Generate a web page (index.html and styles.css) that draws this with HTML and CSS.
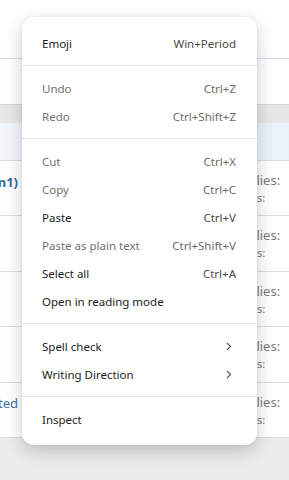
FILE: index.html
```html
<!DOCTYPE html>
<html>
<head>
<meta charset="utf-8">
<link rel="stylesheet" href="styles.css">
</head>
<body>
<div class="page">
  <div class="top"></div>
  <div class="gap"></div>
  <div class="bar"></div>
  <div class="head"></div>
  <div class="row r1">
    <div class="lead"><span class="topic bold">Question1)</span></div>
    <div class="stats"><div class="stats-in"><span class="st1">Replies:</span><span class="st2">Views:</span></div></div>
  </div>
  <div class="row r2">
    <div class="lead"></div>
    <div class="stats"><div class="stats-in"><span class="st1">Replies:</span><span class="st2">Views:</span></div></div>
  </div>
  <div class="row r3">
    <div class="lead"></div>
    <div class="stats"><div class="stats-in"><span class="st1">Replies:</span><span class="st2">Views:</span></div></div>
  </div>
  <div class="row r4">
    <div class="lead"></div>
    <div class="stats"><div class="stats-in"><span class="st1">Replies:</span><span class="st2">Views:</span></div></div>
  </div>
  <div class="row r5">
    <div class="lead"><span class="topic">Started</span></div>
    <div class="stats"><div class="stats-in"><span class="st1">Replies:</span><span class="st2">Views:</span></div></div>
  </div>
  <div class="foot"></div>
</div>

<div class="menu">
  <div class="item"><span>Emoji</span><span class="key">Win+Period</span></div>
  <div class="sep"></div>
  <div class="item off"><span>Undo</span><span class="key">Ctrl+Z</span></div>
  <div class="item off"><span>Redo</span><span class="key">Ctrl+Shift+Z</span></div>
  <div class="sep"></div>
  <div class="item off"><span>Cut</span><span class="key">Ctrl+X</span></div>
  <div class="item off"><span>Copy</span><span class="key">Ctrl+C</span></div>
  <div class="item"><span>Paste</span><span class="key">Ctrl+V</span></div>
  <div class="item off"><span>Paste as plain text</span><span class="key">Ctrl+Shift+V</span></div>
  <div class="item"><span>Select all</span><span class="key">Ctrl+A</span></div>
  <div class="item"><span>Open in reading mode</span></div>
  <div class="sep"></div>
  <div class="item"><span>Spell check</span><svg class="chev" width="6" height="9" viewBox="0 0 6 9"><path d="M1 1 L4.5 4.5 L1 8" fill="none" stroke="#5a5a5a" stroke-width="1.2"/></svg></div>
  <div class="item"><span>Writing Direction</span><svg class="chev" width="6" height="9" viewBox="0 0 6 9"><path d="M1 1 L4.5 4.5 L1 8" fill="none" stroke="#5a5a5a" stroke-width="1.2"/></svg></div>
  <div class="sep"></div>
  <div class="item"><span>Inspect</span></div>
</div>
</body>
</html>
```

FILE: styles.css
```css
html, body {
  margin: 0;
  padding: 0;
}
body {
  width: 289px;
  height: 480px;
  overflow: hidden;
  position: relative;
  background: #ffffff;
  font-family: "Noto Sans", "DejaVu Sans", sans-serif;
}
.page {
  display: flex;
  flex-direction: column;
  width: 289px;
  height: 480px;
}
.top {
  height: 58px;
  border-bottom: 1px solid #cfdeea;
  flex: none;
}
.gap {
  height: 45px;
  flex: none;
}
.bar {
  height: 18px;
  flex: none;
  background: #e7e7e7;
  border-top: 1px solid #d7d7d7;
}
.head {
  height: 37px;
  flex: none;
  background: linear-gradient(90deg, #f3f7fc 0%, #e9f2fb 100%);
  border-bottom: 1px solid #d6dde4;
}
.row {
  flex: none;
  box-sizing: border-box;
  height: 55.4px;
  border-bottom: 1px solid #dedede;
  display: flex;
  justify-content: space-between;
  background: #ffffff;
}
.lead {
  width: 18px;
  overflow: hidden;
  display: flex;
  justify-content: flex-end;
  padding-top: 11px;
  white-space: nowrap;
}
.topic {
  font-size: 13px;
  color: #3a74a8;
  line-height: 20px;
}
.topic.bold {
  font-weight: 700;
  color: #2c6aa0;
}
.r5 .lead {
  padding-top: 10px;
}
.stats {
  width: 32px;
  overflow: hidden;
  padding-top: 10px;
  color: #7a7a7a;
  white-space: nowrap;
}
.stats-in {
  display: flex;
  flex-direction: column;
  margin-left: -24px;
}
.st1 {
  font-size: 13px;
  line-height: 19px;
}
.st2 {
  font-size: 11px;
  line-height: 15px;
}
.foot {
  flex: 1;
  background: #ececec;
}

.menu {
  position: absolute;
  left: 22px;
  top: 17px;
  width: 235px;
  box-sizing: border-box;
  padding: 12px 0 12px;
  background: #ffffff;
  border-radius: 12px;
  box-shadow: 0 6px 18px rgba(0, 0, 0, 0.2), 0 0 3px rgba(0, 0, 0, 0.06);
  font-size: 11.5px;
  color: #1c1c1c;
}
.item {
  height: 28px;
  display: flex;
  align-items: center;
  justify-content: space-between;
  padding: 0 21px 0 20px;
  white-space: nowrap;
}
.key {
  color: #4a4a4a;
}
.item.off {
  color: #707070;
}
.item.off .key {
  color: #6a6a6a;
}
.chev {
  margin-right: 4px;
}
.sep {
  height: 1px;
  background: #dde5ec;
  margin: 8px 0 8px;
}
```
